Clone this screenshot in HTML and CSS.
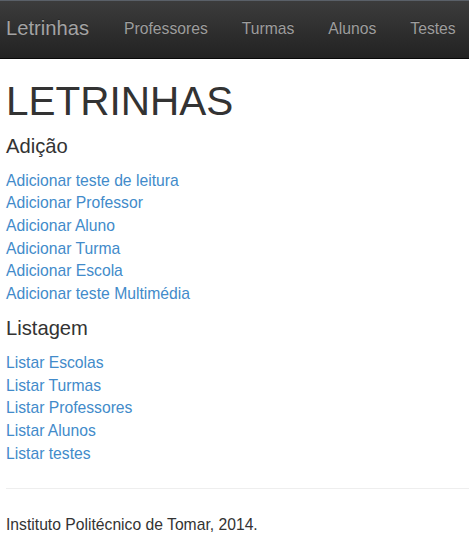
FILE: index.html
```html
<!DOCTYPE html>
<html lang="pt">
<head>
<meta charset="utf-8">
<title>Letrinhas</title>
<link rel="stylesheet" href="styles.css">
</head>
<body>
<nav class="navbar">
  <a class="brand" href="#">Letrinhas</a>
  <ul class="nav">
    <li><a href="#">Professores</a></li>
    <li><a href="#">Turmas</a></li>
    <li><a href="#">Alunos</a></li>
    <li><a href="#">Testes</a></li>
  </ul>
</nav>
<main class="container">
  <h1 class="title">LETRINHAS</h1>
  <h4 class="section">Adição</h4>
  <ul class="links">
    <li><a href="#">Adicionar teste de leitura</a></li>
    <li><a href="#">Adicionar Professor</a></li>
    <li><a href="#">Adicionar Aluno</a></li>
    <li><a href="#">Adicionar Turma</a></li>
    <li><a href="#">Adicionar Escola</a></li>
    <li><a href="#">Adicionar teste Multimédia</a></li>
  </ul>
  <h4 class="section">Listagem</h4>
  <ul class="links">
    <li><a href="#">Listar Escolas</a></li>
    <li><a href="#">Listar Turmas</a></li>
    <li><a href="#">Listar Professores</a></li>
    <li><a href="#">Listar Alunos</a></li>
    <li><a href="#">Listar testes</a></li>
  </ul>
  <hr class="divider">
  <footer class="footer">Instituto Politécnico de Tomar, 2014.</footer>
</main>
</body>
</html>
```

FILE: styles.css
```css
html, body {
  margin: 0;
  padding: 0;
}
body {
  font-family: "Liberation Sans", Arial, sans-serif;
  font-size: 15.7px;
  line-height: 22.7px;
  color: #333;
  background: #fff;
}
a {
  color: #428bca;
  text-decoration: none;
}
.navbar {
  display: flex;
  align-items: stretch;
  height: 57px;
  border-top: 1px solid #5a6068;
  border-bottom: 1px solid #080808;
  background-image: linear-gradient(to bottom, #3c3c3c 0, #222 100%);
  box-sizing: content-box;
  overflow: hidden;
  white-space: nowrap;
}
.brand {
  display: block;
  padding: 16px 18px 0 6px;
  font-size: 20.2px;
  line-height: 22.86px;
  color: #a3a3a3;
  text-shadow: 0 -1px 0 rgba(0, 0, 0, .25);
}
.nav {
  display: flex;
  margin: 0;
  padding: 0;
  list-style: none;
}
.nav a {
  display: block;
  padding: 17px 17px 0 17px;
  line-height: 22.86px;
  color: #9d9d9d;
  text-shadow: 0 -1px 0 rgba(0, 0, 0, .25);
}
.container {
  padding: 0 0 0 6px;
}
.title {
  margin: 20px 0 11.4px;
  font-size: 40.5px;
  font-weight: 500;
  line-height: 1.1;
  color: #333;
}
.section {
  margin: 11.4px 0 12.5px;
  font-size: 20.2px;
  font-weight: 500;
  line-height: 1.1;
}
.links {
  margin: 0;
  padding: 0;
  list-style: none;
}
.divider {
  margin: 22px 0 25px;
  border: 0;
  border-top: 1px solid #eee;
}
.footer {
  padding-bottom: 10px;
}
```
